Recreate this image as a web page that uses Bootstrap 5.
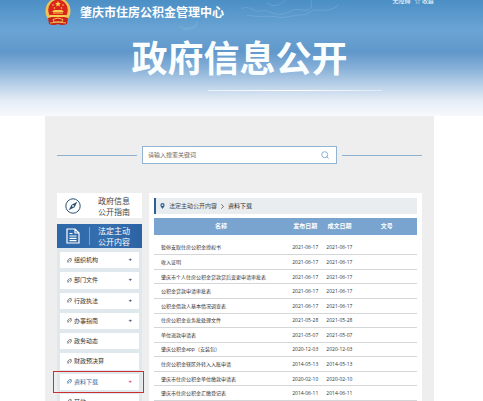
<!DOCTYPE html>
<html lang="zh-CN">
<head>
<meta charset="utf-8">
<meta name="viewport" content="width=device-width, initial-scale=1">
<title>肇庆市住房公积金管理中心 - 政府信息公开</title>
<link rel="stylesheet" href="https://cdn.jsdelivr.net/npm/bootstrap@5.3.0/dist/css/bootstrap.min.css">
<style>
  body { font-family: "Open Sans", "Noto Sans CJK SC", sans-serif; font-size: 6px; line-height: 10px; color: #444; background: #fff; height: 100vh; overflow: hidden; }
  a { color: inherit; text-decoration: none; }
  .page-wrap { padding-left: 45px; padding-right: 49px; }
  .hero { height: 116px; background: linear-gradient(#4b8fc5 0, #6aa4d4 30px, #6198cb 52px, #86b0d8 68px, #bdd3e9 86px, #e7eef7 102px, #f8f9fd 116px); }
  .hero-swirl { width: 180px; height: 30px; left: 175px; top: 0; }
  .util { height: 4px; overflow: hidden; color: #fff; line-height: 6px; }
  .brand-row { height: 22px; margin-top: -3px; }
  .emblem { width: 26px; height: 28px; }
  .site-name { font-size: 12px; line-height: 20px; font-weight: 700; color: #fff; padding: 1px 0 0 9px; }
  .hero-title { font-size: 36px; line-height: 48px; font-weight: 700; color: #fafeff; margin-top: 12px; }
  .hero-rule { width: 174px; height: 1px; margin: 7px 0 0 163px; background: linear-gradient(90deg, #e5f1fb, #fff 50%, #dbe8f5); }
  .panel { background: #eee; padding: 30px 12px 0; }
  .search-row { gap: 5px; margin-bottom: 29px; }
  .side-rule { height: 1px; background: #8db1d2; }
  .search-box { width: 195px; height: 18px; border: 1px solid #92b4d0; background: #fff; padding: 0 7px 0 5px; }
  .search-box input { font-size: 6px; line-height: 10px; color: #555; outline: 0; min-width: 0; }
  .search-box input::placeholder { color: #666; opacity: 1; }
  .search-box svg { width: 8px; height: 8px; }
  .columns { gap: 7px; }
  .sidebar { width: 85px; }
  .side-head { height: 25px; background: #fff; font-size: 8px; line-height: 11px; color: #444; padding-left: 8px; }
  .side-head svg { width: 16px; height: 16px; }
  .side-head .head-label { margin-left: 17px; }
  .side-head.current { margin-top: 6px; height: 24px; color: #fff; background: linear-gradient(90deg, #2c67a9, #366fae 60%, #2a62a3); }
  .side-head.current .head-label { margin-left: 8px; }
  .head-bar { width: 1px; height: 18px; margin-left: 8px; background: #7ba2cd; }
  .side-list { display: grid; grid-auto-rows: 1fr; gap: 4px; height: 162px; padding: 4px 3px 0; background: #dfe8ec; }
  .side-item { background: #fff; color: #333; padding: 0 7px; }
  .side-item svg { width: 5px; height: 5px; margin-right: 2px; }
  .side-item .ms-auto { font-weight: 700; }
  .side-item.chosen { color: #2d669f; }
  .side-item.chosen::after { content: ""; position: absolute; inset: -3px -5px -3px -7px; border: 1px solid #cc2f2f; }
  .content { background: #fff; padding: 5px 5px 0; }
  .crumbs { height: 16px; background: #e9edf0; border-left: 2px solid #2d5f92; padding-left: 4px; color: #444; }
  .crumbs svg { width: 5px; height: 6px; }
  .crumbs .sep { width: 3px; height: 5px; margin: 0 4px; }
  .files { height: 183px; font-size: 5px; line-height: 8px; margin-top: 4px; width: 100%; table-layout: fixed; border-collapse: collapse; }
  .files th { height: 19px; font-size: 6px; background: #78a4cf; color: #fff; text-align: center; padding: 0; }
  .files tbody { border-top: 5px solid #fff; }
  .files td { padding: 0; text-align: center; color: #333; border-bottom: 1px solid #d4d6d8; white-space: nowrap; }
  .files td:first-child { text-align: left; padding-left: 7px; }
  .c-name { width: 51%; }
  .c-date { width: 13%; }
</style>
</head>
<body>
<header class="hero page-wrap position-relative">
  <svg class="hero-swirl position-absolute" viewBox="0 0 180 30" fill="none" stroke="#a5c9e6" stroke-opacity=".25" aria-hidden="true">
    <path d="M66 9c8-5 12 4 20 2s12 5 22 3 8-6 18-4 12-3 10-10M72 15c12 3 22 0 30 2s14-2 24-2 8-6 18-5 16-1 20-6M92 3c6 5 14 2 18-3M4 26c6 4 14 2 18-2M8 29c10 2 16-4 14-8"/>
  </svg>
  <div class="util d-flex justify-content-end align-items-end gap-1">
    <a href="#">无障碍</a><a href="#">☆ 收藏</a>
  </div>
  <div class="brand-row d-flex align-items-center position-relative">
    <svg class="emblem" viewBox="0 0 26 28" aria-hidden="true">
      <ellipse cx="13" cy="13" rx="12.5" ry="13" fill="#edc45a"/>
      <ellipse cx="13" cy="12" rx="9.8" ry="10.3" fill="#d9251c"/>
      <path d="M13 3l.9 1.9 2 .2-1.500 1.400.4 2L13 7.500l-1.800 1 .4-2-1.500-1.400 2-.2z" fill="#f7cf4c"/>
      <g fill="#f7cf4c"><circle cx="8" cy="7" r=".8"/><circle cx="18" cy="7" r=".8"/><circle cx="9.500" cy="10" r=".8"/><circle cx="16.500" cy="10" r=".8"/>
      <path d="M7 14l2-2h8l2 2zM8 14.500h10v1H8zM5 17h16v2H5z"/></g>
      <path d="M3 20q5-2 8 1h4q3-3 8-1l-1 6q-5 2-9 0-4 2-9 0z" fill="#c9201b"/>
      <path d="M8 21.500q5-3 10 0l-1 2.500H9zM5 25q8-2 16 0" fill="none" stroke="#edbb4e"/>
    </svg>
    <div class="site-name">肇庆市住房公积金管理中心</div>
  </div>
  <h1 class="hero-title text-center mb-0">政府信息公开</h1>
  <div class="hero-rule"></div>
</header>

<main class="page-wrap">
  <div class="panel">
    <form class="search-row d-flex align-items-center">
      <span class="side-rule flex-fill"></span>
      <div class="search-box d-flex align-items-center">
        <input class="border-0 p-0 flex-fill bg-transparent" type="search" placeholder="请输入搜索关键词" aria-label="请输入搜索关键词">
        <button class="border-0 p-0 bg-transparent d-flex" type="button" aria-label="搜索">
          <svg viewBox="0 0 8 8" fill="none" stroke="#6f9cc4" stroke-width=".8"><circle cx="3.700" cy="3.700" r="3"/><path d="M5.400 5.400l2.200 2.200"/></svg>
        </button>
      </div>
      <span class="side-rule flex-fill"></span>
    </form>

    <div class="columns d-flex align-items-stretch">
      <nav class="sidebar flex-shrink-0" aria-label="公开栏目">
        <a class="side-head d-flex align-items-center" href="#">
          <svg viewBox="0 0 16 16" fill="none" stroke="#2b5274"><circle cx="8" cy="8" r="7.200"/><path d="M12.300 3.700L9.600 9.200 3.700 12.300 6.600 6.700z" fill="#2b5274" stroke="none"/><circle cx="8" cy="8" r=".9" fill="#fff" stroke="none"/></svg>
          <span class="head-label">政府信息<br>公开指南</span>
        </a>
        <a class="side-head current d-flex align-items-center" href="#">
          <svg viewBox="0 0 16 16" fill="none" stroke="#fff" stroke-width="1.200"><path d="M2 1h8l4 4v10H2zM10 1v4h4M4.500 8h7M4.500 10.300h7M4.500 12.600h7M4.500 5.500h3"/></svg>
          <span class="head-bar"></span>
          <span class="head-label">法定主动<br>公开内容</span>
        </a>
        <div class="side-list">
          <a class="side-item d-flex align-items-center" href="#"><svg viewBox="0 0 5 5" fill="none" stroke="#555" stroke-width=".7"><path d="M2 3.500L.8 4.300V2L2.500.6h1.700V3L2.800 4.300M2 2.800l1.200-1.200"/></svg>组织机构<span class="ms-auto">+</span></a>
          <a class="side-item d-flex align-items-center" href="#"><svg viewBox="0 0 5 5" fill="none" stroke="#555" stroke-width=".7"><path d="M2 3.500L.8 4.300V2L2.500.6h1.700V3L2.800 4.300M2 2.800l1.200-1.200"/></svg>部门文件<span class="ms-auto">+</span></a>
          <a class="side-item d-flex align-items-center" href="#"><svg viewBox="0 0 5 5" fill="none" stroke="#555" stroke-width=".7"><path d="M2 3.500L.8 4.300V2L2.500.6h1.700V3L2.800 4.300M2 2.800l1.200-1.200"/></svg>行政执法<span class="ms-auto">+</span></a>
          <a class="side-item d-flex align-items-center" href="#"><svg viewBox="0 0 5 5" fill="none" stroke="#555" stroke-width=".7"><path d="M2 3.500L.8 4.300V2L2.500.6h1.700V3L2.800 4.300M2 2.800l1.200-1.200"/></svg>办事指南<span class="ms-auto">+</span></a>
          <a class="side-item d-flex align-items-center" href="#"><svg viewBox="0 0 5 5" fill="none" stroke="#555" stroke-width=".7"><path d="M2 3.500L.8 4.300V2L2.500.6h1.700V3L2.800 4.300M2 2.800l1.200-1.200"/></svg>政务动态</a>
          <a class="side-item d-flex align-items-center" href="#"><svg viewBox="0 0 5 5" fill="none" stroke="#555" stroke-width=".7"><path d="M2 3.500L.8 4.300V2L2.500.6h1.700V3L2.800 4.300M2 2.800l1.200-1.200"/></svg>财政预决算</a>
          <a class="side-item chosen position-relative d-flex align-items-center" href="#" aria-current="page"><svg viewBox="0 0 5 5" fill="none" stroke="#2d669f" stroke-width=".7"><path d="M2 3.500L.8 4.300V2L2.500.6h1.700V3L2.800 4.300M2 2.800l1.200-1.200"/></svg>资料下载<span class="ms-auto text-danger">+</span></a>
          <a class="side-item d-flex align-items-center" href="#"><svg viewBox="0 0 5 5" fill="none" stroke="#555" stroke-width=".7"><path d="M2 3.500L.8 4.300V2L2.500.6h1.700V3L2.800 4.300M2 2.800l1.200-1.200"/></svg>其他</a>
        </div>
      </nav>

      <section class="content flex-fill">
        <div class="crumbs d-flex align-items-center">
          <svg viewBox="0 0 5 6" aria-hidden="true"><path fill="#2d5f92" fill-rule="evenodd" d="M2.500 0a2.100 2.100 0 0 1 2.100 2.100C4.600 3.600 2.500 6 2.500 6S.4 3.600.4 2.100A2.100 2.100 0 0 1 2.500 0zm0 1.200a.9.9 0 1 0 0 1.800.9.900 0 0 0 0-1.800z"/></svg>
          <a class="ms-1" href="#">法定主动公开内容</a><svg class="sep" viewBox="0 0 3 5" fill="none" stroke="#444" stroke-width=".8" aria-hidden="true"><path d="M.4.4l2.100 2.100L.4 4.600"/></svg><a class="text-dark" href="#">资料下载</a>
        </div>
        <table class="files">
          <colgroup><col class="c-name"><col class="c-date"><col class="c-date"><col></colgroup>
          <thead><tr><th scope="col">名称</th><th scope="col">发布日期</th><th scope="col">成文日期</th><th scope="col">文号</th></tr></thead>
          <tbody>
            <tr><td>暂停支取住房公积金授权书</td><td>2021-06-17</td><td>2021-06-17</td><td></td></tr>
            <tr><td>收入证明</td><td>2021-06-17</td><td>2021-06-17</td><td></td></tr>
            <tr><td>肇庆市个人住房公积金贷款贷后变更申请审批表</td><td>2021-06-17</td><td>2021-06-17</td><td></td></tr>
            <tr><td>公积金贷款申请审批表</td><td>2021-06-17</td><td>2021-06-17</td><td></td></tr>
            <tr><td>公积金借款人基本情况调查表</td><td>2021-06-17</td><td>2021-06-17</td><td></td></tr>
            <tr><td>住房公积金业务批处理文件</td><td>2021-05-28</td><td>2021-05-28</td><td></td></tr>
            <tr><td>单位退款申请表</td><td>2021-05-07</td><td>2021-05-07</td><td></td></tr>
            <tr><td>肇庆公积金app（安装包）</td><td>2020-12-03</td><td>2020-12-03</td><td></td></tr>
            <tr><td>住房公积金辖区外转入入账申请</td><td>2014-05-13</td><td>2014-05-13</td><td></td></tr>
            <tr><td>肇庆市住房公积金单位缴款申请表</td><td>2020-02-10</td><td>2020-02-10</td><td></td></tr>
            <tr><td>肇庆市住房公积金汇缴登记表</td><td>2014-06-11</td><td>2014-06-11</td><td></td></tr>
          </tbody>
        </table>
      </section>
    </div>
  </div>
</main>
<script src="https://cdn.jsdelivr.net/npm/bootstrap@5.3.0/dist/js/bootstrap.bundle.min.js"></script>
</body>
</html>
